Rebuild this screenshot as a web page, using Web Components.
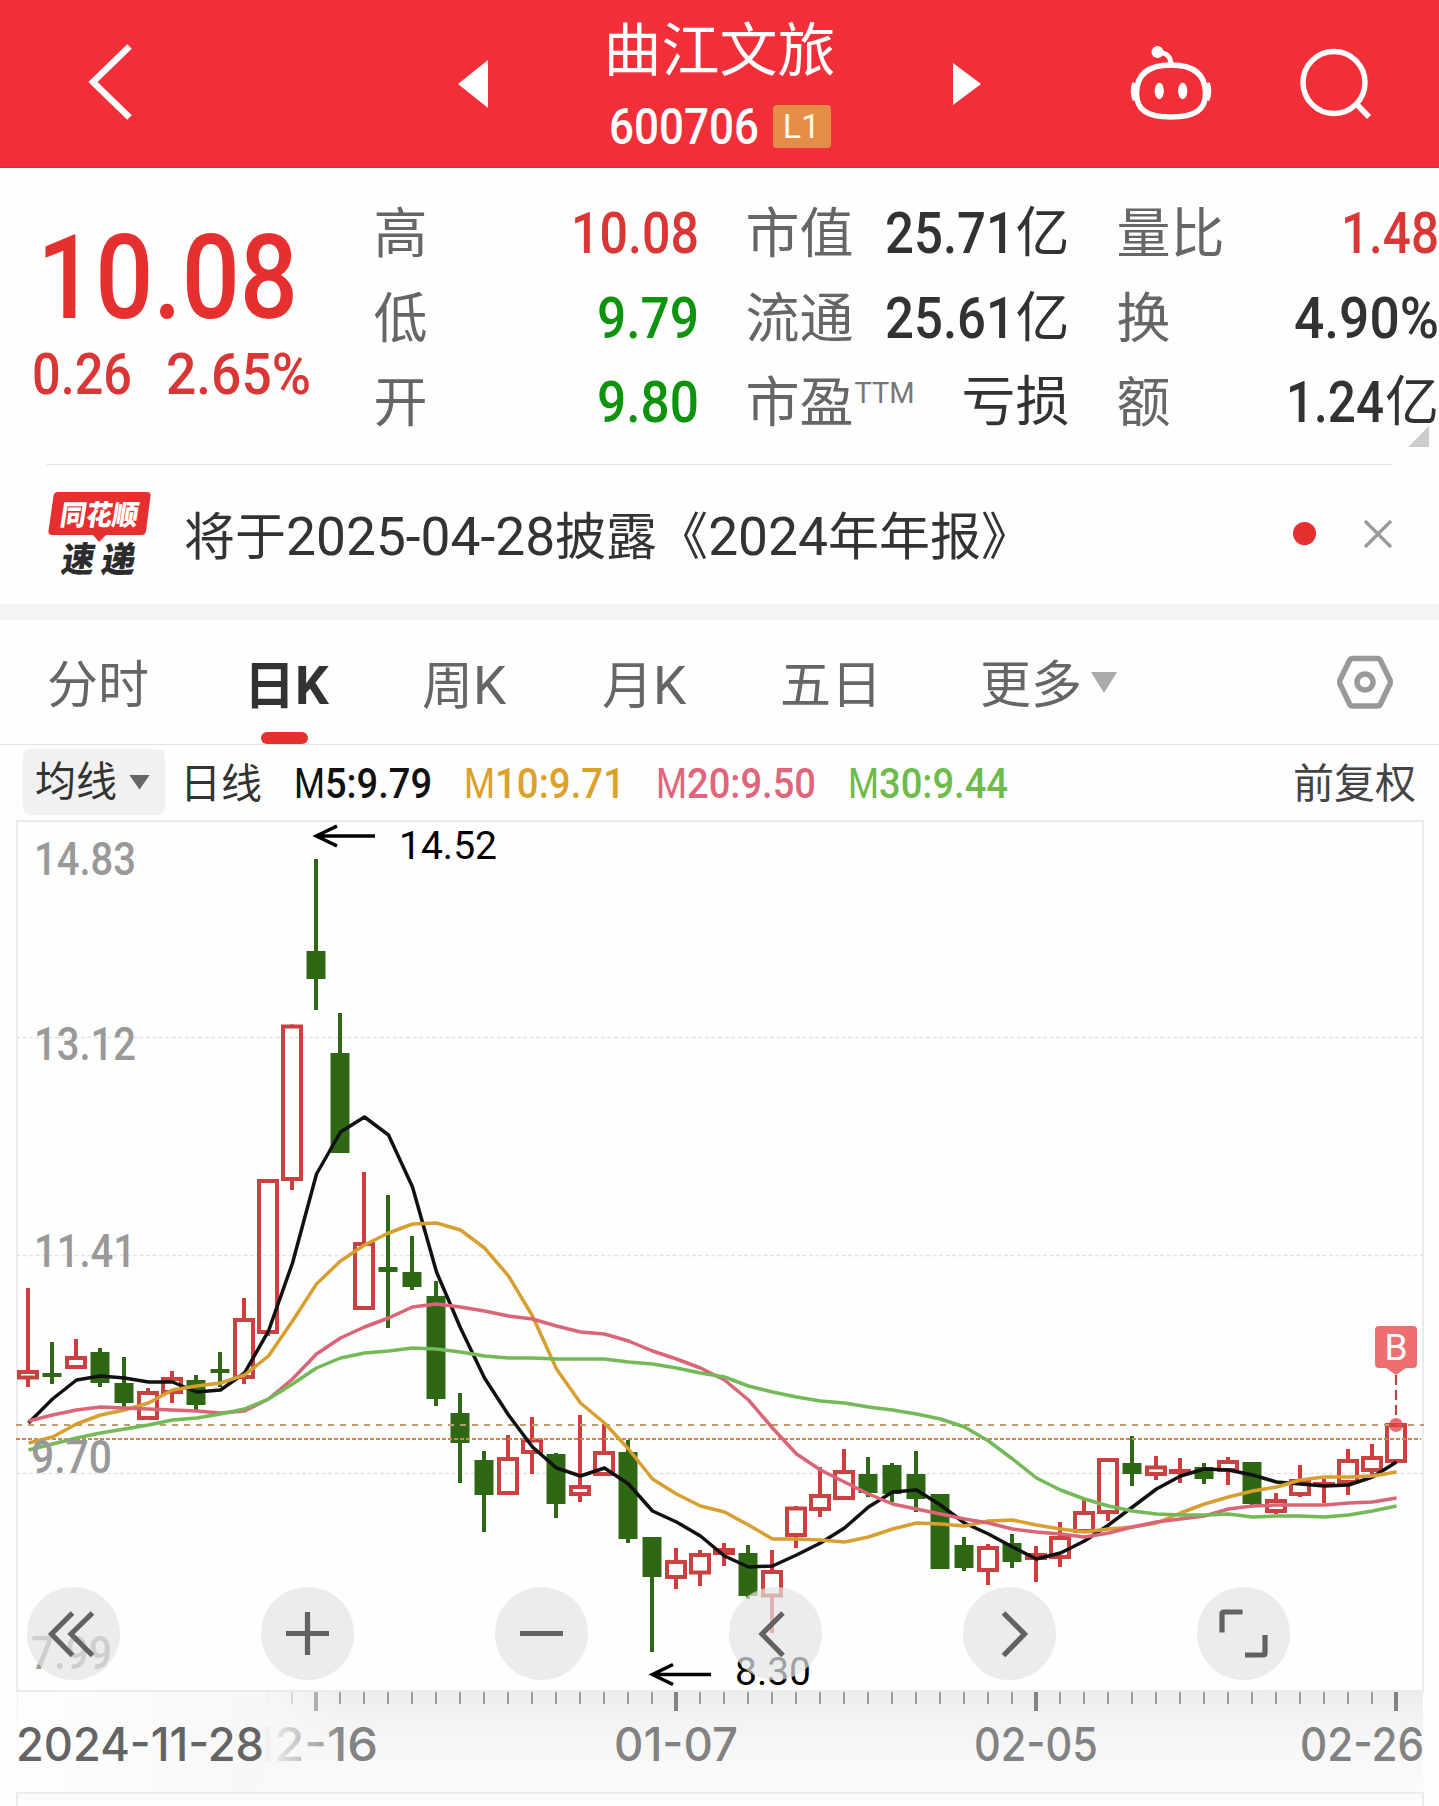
<!DOCTYPE html>
<html lang="zh-CN">
<head>
<meta charset="utf-8">
<title>曲江文旅 600706</title>
<style>
  body {
    margin: 0;
    width: 1439px;
    height: 1806px;
    overflow: hidden;
    background: #fefefe;
    color: #333;
    font-family: Roboto, "Noto Sans CJK SC", sans-serif;
  }
</style>
</head>
<body>
<stock-header code="600706" level="L1">曲江文旅</stock-header>

<quote-panel>
  <din-text slot="price" w="261" size="116" weight="500">10.08</din-text>
  <din-text slot="change" w="100" size="57.5" weight="500">0.26</din-text>
  <din-text slot="change" w="145" size="57.5" weight="500">2.65%</din-text>
  <stat-list>
    <stat-row label="高" tone="up"><din-text w="128" size="57.5" weight="500">10.08</din-text></stat-row>
    <stat-row label="低" tone="down"><din-text w="102" size="57.5" weight="500">9.79</din-text></stat-row>
    <stat-row label="开" tone="down"><din-text w="102" size="57.5" weight="500">9.80</din-text></stat-row>
  </stat-list>
  <stat-list>
    <stat-row label="市值"><din-text w="130" size="57.5" weight="500">25.71</din-text>亿</stat-row>
    <stat-row label="流通"><din-text w="130" size="57.5" weight="500">25.61</din-text>亿</stat-row>
    <stat-row label="市盈" sup="TTM">亏损</stat-row>
  </stat-list>
  <stat-list>
    <stat-row label="量比" tone="up"><din-text w="98" size="57.5" weight="500">1.48</din-text></stat-row>
    <stat-row label="换"><din-text w="145" size="57.5" weight="500">4.90%</din-text></stat-row>
    <stat-row label="额"><din-text w="98" size="57.5" weight="500">1.24</din-text>亿</stat-row>
  </stat-list>
</quote-panel>

<news-bar>将于<span>2025-04-28</span>披露《<span>2024</span>年年报》</news-bar>

<chart-tabs>
  <chart-tab w="197">分时</chart-tab>
  <chart-tab w="178" active>日<span>K</span></chart-tab>
  <chart-tab w="180">周<span>K</span></chart-tab>
  <chart-tab w="178">月<span>K</span></chart-tab>
  <chart-tab w="200">五日</chart-tab>
  <chart-tab more>更多</chart-tab>
</chart-tabs>

<ma-bar></ma-bar>
<kline-chart></kline-chart>

<script>
// Condensed figures: the slotted text is squeezed to exactly `w` pixels
class DinText extends HTMLElement {
  constructor() {
    super();
    this.attachShadow({ mode: 'open' });
    this.shadowRoot.innerHTML = `
      <style>
        :host { display: inline-block; white-space: nowrap; }
        span { display: inline-block; transform-origin: 0 50%; }
      </style>
      <span><slot></slot></span>
    `;
  }

  connectedCallback() {
    const w = Number(this.getAttribute('w'));
    const span = this.shadowRoot.querySelector('span');
    this.style.fontSize = this.getAttribute('size') + 'px';
    this.style.fontWeight = this.getAttribute('weight') || 400;
    span.style.transform = 'none';
    const natural = span.getBoundingClientRect().width;
    this.style.width = w + 'px';
    span.style.transform = `scaleX(${w / natural})`;
  }
}

class StockHeader extends HTMLElement {
  constructor() {
    super();
    this.attachShadow({ mode: 'open' });
    this.shadowRoot.innerHTML = `
      <style>
        :host {
          display: grid;
          grid-template-columns: 458px 30px 1fr 28px 458px;
          align-items: center;
          box-sizing: border-box;
          height: 168px;
          background: #f22f38;
          border-bottom: 1px solid #c9343b;
          color: #fff;
        }
        svg { display: block; fill: none; stroke: #fff; overflow: visible; }
        .solid { fill: #fff; stroke: none; }
        .title { display: flex; flex-direction: column; align-items: center; height: 168px; box-sizing: border-box; padding-top: 16px; }
        .name { font-size: 58px; line-height: 70px; height: 70px; margin-left: -2px; }
        .code { display: flex; align-items: center; gap: 14px; height: 82px; line-height: 84px; margin-left: -2px; }
        .level {
          width: 58px; height: 43px; line-height: 43px;
          margin-top: -2px;
          border-radius: 4px;
          background: #e38d49;
          color: #fffbe0;
          font-size: 34px;
          text-align: center;
        }
        .back { padding-left: 88px; margin-top: -5px; }
        .tools { display: flex; align-items: center; }
        .robot { margin-left: 147px; margin-top: -3px; }
        .search { margin-left: 89px; margin-top: -1px; }
      </style>
      <div class="back">
        <svg width="46" height="76" viewBox="88 43 46 76" stroke-width="6.500"><path d="M129.500 45.500 93 81l36.500 35.500"/></svg>
      </div>
      <svg class="solid" width="30" height="48" viewBox="458 60 30 48"><path d="M458 84l30-24v48z"/></svg>
      <div class="title">
        <div class="name"><slot></slot></div>
        <div class="code">
          <din-text w="150" size="49.5" weight="500">${this.getAttribute('code')}</din-text>
          <span class="level">${this.getAttribute('level')}</span>
        </div>
      </div>
      <svg class="solid" width="28" height="42" viewBox="953 63 28 42"><path d="M953 63v42l28-21z"/></svg>
      <div class="tools">
        <svg class="robot" width="84" height="76" viewBox="1128 44 84 76" stroke-width="5.500">
          <circle class="solid" cx="1157.500" cy="51" r="6"/>
          <path d="M1158 51.500c9 0 12.500 3.500 13 12" stroke-width="5"/>
          <path d="M1171 64c25 0 34.500 11 34.500 28.500 0 16-10 23.500-34.500 23.500s-34.500-7.500-34.500-23.500C1136.500 75 1146 64 1171 64z"/>
          <path d="M1134.600 82q-3 9 .5 17M1207.400 82q3 9-.5 17" stroke-width="5"/>
          <ellipse class="solid" cx="1159.300" cy="90" rx="4.600" ry="8.200"/>
          <ellipse class="solid" cx="1182.700" cy="90" rx="4.600" ry="8.200"/>
        </svg>
        <svg class="search" width="70" height="72" viewBox="1301 48 70 72" stroke-width="5.500">
          <circle cx="1334" cy="82.500" r="31"/>
          <path d="M1356.500 104l12.500 13"/>
        </svg>
      </div>
    `;
  }
}

class QuotePanel extends HTMLElement {
  constructor() {
    super();
    this.attachShadow({ mode: 'open' });
    this.shadowRoot.innerHTML = `
      <style>
        :host {
          display: grid;
          grid-template-columns: 326.500px 325px 324px 1fr;
          column-gap: 47px;
          box-sizing: border-box;
          height: 296px;
          padding-top: 22px;
          position: relative;
        }
        .price { color: #e62f2f; padding-left: 34px; }
        .now { height: 128px; line-height: 128px; padding-top: 24px; margin-left: 3px; }
        .change { display: flex; gap: 34px; height: 62px; line-height: 62px; margin-left: -2px; margin-top: 2px; color: #d93636; }
        .corner { position: absolute; right: 10px; bottom: 17px; width: 21px; height: 21px; background: #ccc; clip-path: polygon(100% 0, 100% 100%, 0 100%); }
      </style>
      <div class="price">
        <div class="now"><slot name="price"></slot></div>
        <div class="change"><slot name="change"></slot></div>
      </div>
      <slot></slot>
      <i class="corner"></i>
    `;
  }
}

class StatList extends HTMLElement {
  constructor() {
    super();
    this.attachShadow({ mode: 'open' });
    this.shadowRoot.innerHTML = `
      <style>
        :host { display: flex; flex-direction: column; padding-top: 2px; }
      </style>
      <slot></slot>
    `;
  }
}

class StatRow extends HTMLElement {
  constructor() {
    super();
    this.attachShadow({ mode: 'open' });
    this.shadowRoot.innerHTML = `
      <style>
        :host { display: flex; justify-content: space-between; height: 84.500px; line-height: 84.500px; font-size: 54px; color: #323232; white-space: nowrap; }
        :host([tone="up"]) .value { color: #d93636; }
        :host([tone="down"]) .value { color: #0f930f; }
        .label { color: #666; display: flex; padding-top: 1px; }
        .value { display: flex; gap: 1px; }
        sup { font-size: 29px; line-height: 62px; margin-left: 1px; color: #777; }
      </style>
      <div class="label"><span></span></div>
      <div class="value"><slot></slot></div>
    `;
    this.shadowRoot.querySelector('span').textContent = this.getAttribute('label');
    if (this.hasAttribute('sup')) {
      const sup = document.createElement('sup');
      sup.textContent = this.getAttribute('sup');
      this.shadowRoot.querySelector('.label').append(sup);
    }
  }
}

class NewsBar extends HTMLElement {
  constructor() {
    super();
    this.attachShadow({ mode: 'open' });
    this.shadowRoot.innerHTML = `
      <style>
        :host { display: block; height: 156px; }
        .row {
          display: flex;
          align-items: center;
          box-sizing: border-box;
          height: 140px;
          margin: 0 46px 0 46px;
          border-top: 1px solid #e6e6e6;
        }
        .band { height: 16px; background: #f4f4f4; }
        .logo { flex: none; margin: -2px 31px 0 1px; overflow: visible; }
        .text { flex: 1; font-size: 51px; line-height: 140px; margin-top: 5px; white-space: nowrap; color: #333; }
        ::slotted(span) { font-size: 53.300px; }
        .dot { width: 23px; height: 23px; border-radius: 50%; background: #e62f2f; margin-right: 47px; margin-top: -2px; }
        .close { fill: none; stroke: #999; stroke-width: 3.200; margin-top: -1px; }
      </style>
      <div class="row">
        <svg class="logo" width="106" height="88" viewBox="47 490 106 88">
          <path fill="#e62f2f" d="M58 492h89q4 0 3.500 4l-4.500 35q-.5 4-4.500 4H106l-7 7-6-7H52q-4 0-3.500-4l5-35q.5-4 4.500-4z"/>
          <g font-family="Noto Sans CJK SC, sans-serif" font-weight="900">
            <text transform="translate(59 524.500) skewX(-9)" font-size="28" textLength="78" lengthAdjust="spacingAndGlyphs" fill="#fff">同花顺</text>
            <text transform="translate(60 571.500) skewX(-9)" font-size="35" textLength="33" lengthAdjust="spacingAndGlyphs" fill="#2c2c2c">速</text>
            <text transform="translate(100 571.500) skewX(-9)" font-size="35" textLength="34" lengthAdjust="spacingAndGlyphs" fill="#2c2c2c">递</text>
          </g>
        </svg>
        <div class="text"><slot></slot></div>
        <i class="dot"></i>
        <svg class="close" width="30" height="30"><path d="M2 2l26 26M28 2L2 28"/></svg>
      </div>
      <div class="band"></div>
    `;
  }
}

class ChartTabs extends HTMLElement {
  constructor() {
    super();
    this.attachShadow({ mode: 'open' });
    this.shadowRoot.innerHTML = `
      <style>
        :host {
          display: flex;
          align-items: center;
          box-sizing: border-box;
          height: 125px;
          padding: 0 46px 0 47px;
          border-bottom: 1px solid #e3e3e3;
        }
        svg { margin-left: auto; fill: none; stroke: #999; }
      </style>
      <slot></slot>
      <svg width="56" height="54" viewBox="1337 655 56 54" stroke-width="5.500">
        <path stroke-linejoin="round" d="M1352.500 658.500h25q2 0 3 2l9.500 19.500q1 2 0 4l-9.500 20q-1 2-3 2h-25q-2 0-3-2l-9.500-20q-1-2 0-4l9.500-19.500q1-2 3-2z"/>
        <circle cx="1365" cy="682" r="8"/>
      </svg>
    `;
  }
}

class ChartTab extends HTMLElement {
  constructor() {
    super();
    this.attachShadow({ mode: 'open' });
    this.shadowRoot.innerHTML = `
      <style>
        :host { display: block; flex: none; position: relative; box-sizing: border-box; height: 124px; padding-top: 4px; font-size: 51px; line-height: 124px; color: #666; white-space: nowrap; }
        ::slotted(span) { font-size: 53px; }
        :host([active]) { color: #333; font-weight: 700; }
        :host([active])::after {
          content: "";
          position: absolute;
          left: 17px;
          bottom: 0;
          width: 47px;
          height: 12px;
          border-radius: 6px;
          background: #e62f2f;
        }
        .arrow { display: none; vertical-align: 10px; margin-left: 9px; width: 26px; height: 21px; background: #aaa; clip-path: polygon(0 0, 100% 0, 50% 100%); }
        :host([more]) .arrow { display: inline-block; }
      </style>
      <slot></slot><i class="arrow"></i>
    `;
    this.style.width = this.hasAttribute('w') ? this.getAttribute('w') + 'px' : 'auto';
  }
}

class MaBar extends HTMLElement {
  constructor() {
    super();
    this.attachShadow({ mode: 'open' });
    // text, width of the figures, cell width, colour
    const items = [
      ['5:9.79', 107, 170, '#111'],
      ['10:9.71', 130, 192, '#dba12a'],
      ['20:9.50', 129, 192, '#e0657a'],
      ['30:9.44', 129, 170, '#6dbb4c'],
    ];
    this.shadowRoot.innerHTML = `
      <style>
        :host { display: flex; align-items: center; box-sizing: border-box; height: 75px; padding: 0 23px 0 23px; font-size: 41px; line-height: 68px; color: #333; }
        .chip { display: flex; align-items: center; box-sizing: border-box; width: 142px; height: 66px; margin-top: -1px; padding-left: 12px; border-radius: 8px; background: #f1f1f1; }
        .chip i { width: 21px; height: 15px; margin-left: 12px; background: #666; clip-path: polygon(0 0, 100% 0, 50% 100%); }
        .kind { margin-left: 15px; width: 114px; }
        .kind, .item, .adjust { padding-top: 2px; }
        .item { display: flex; }
        .adjust { margin-left: auto; color: #444; }
      </style>
      <div class="chip">均线<i></i></div>
      <div class="kind">日线</div>
      ${items.map(([t, w, cell, c]) => `<div class="item" style="color:${c};width:${cell}px"><din-text w="31" size="42">M</din-text><din-text w="${w}" size="42" weight="500">${t}</din-text></div>`).join('')}
      <div class="adjust">前复权</div>
    `;
  }
}

// One entry per day: colour (r/g), high, body top, body bottom, low - in plot units
const CANDLES = [
  ['r', 1288, 1370, 1379.5, 1387], ['g', 1342, 1373, 1377, 1384], ['r', 1339, 1356, 1369, 1369],
  ['g', 1348, 1352, 1383, 1387], ['g', 1357, 1383, 1403, 1408], ['r', 1388, 1391, 1420, 1420],
  ['r', 1371, 1377, 1394, 1403], ['g', 1375, 1380, 1405, 1412], ['g', 1352, 1369, 1373, 1387],
  ['r', 1298, 1318, 1379, 1384], ['r', 1179, 1179, 1334, 1336], ['r', 1024.5, 1024.5, 1181, 1190],
  ['g', 859, 951, 979, 1010], ['g', 1013, 1053, 1153, 1153], ['r', 1172, 1242, 1310, 1310],
  ['g', 1195, 1267, 1272, 1328], ['g', 1236, 1272, 1287, 1290], ['g', 1281, 1296, 1399, 1406],
  ['g', 1393, 1413, 1443, 1483], ['g', 1451, 1460, 1495, 1532], ['r', 1435, 1457, 1495, 1495],
  ['r', 1417, 1438.5, 1454, 1474], ['g', 1453, 1454, 1504, 1518], ['r', 1415, 1485, 1496, 1502],
  ['r', 1424, 1451, 1476, 1476], ['g', 1440, 1452, 1539, 1543], ['g', 1537, 1537, 1577, 1652],
  ['r', 1548, 1560, 1579, 1589], ['r', 1550, 1553, 1574.5, 1586], ['r', 1543, 1548, 1555, 1566],
  ['g', 1545, 1553, 1596, 1599], ['r', 1550, 1570, 1597.5, 1633], ['r', 1506, 1506.5, 1537, 1548],
  ['r', 1467, 1494, 1511, 1517], ['r', 1449, 1470, 1500, 1500], ['g', 1457, 1474, 1493, 1497],
  ['g', 1463, 1465, 1494, 1502], ['g', 1451, 1474, 1499, 1512], ['g', 1494, 1494, 1569, 1569],
  ['g', 1537, 1545, 1568, 1571], ['r', 1544, 1546, 1572, 1585], ['g', 1534, 1543, 1562, 1568],
  ['r', 1546, 1553, 1560, 1582], ['r', 1522, 1536, 1559, 1567], ['r', 1500, 1511, 1533, 1533],
  ['r', 1458, 1458, 1514, 1521], ['g', 1436, 1463, 1474, 1486], ['r', 1456, 1465.5, 1476, 1480],
  ['r', 1458, 1469, 1474, 1483], ['g', 1463, 1467, 1479, 1484], ['r', 1457, 1460, 1472, 1485],
  ['g', 1462, 1462, 1504, 1507], ['r', 1493, 1499, 1513, 1514], ['r', 1465, 1479, 1496, 1497],
  ['r', 1479, 1482, 1485, 1503], ['r', 1449, 1459, 1484, 1495], ['r', 1444, 1456, 1472, 1475],
  ['r', 1423, 1423, 1463, 1463],
];

const AVERAGES = [
  ['#111', [1423, 1399, 1380, 1376, 1378, 1382, 1382, 1392, 1390, 1373, 1331, 1263, 1174, 1132, 1117, 1135, 1187, 1272, 1328, 1378, 1415, 1447, 1468, 1476, 1468, 1484, 1511, 1522, 1536, 1556, 1567, 1566, 1555, 1543, 1528, 1507, 1492, 1490, 1505, 1523, 1534, 1547, 1559, 1553, 1541, 1525, 1507, 1489, 1476, 1469, 1470, 1475, 1482, 1484, 1486, 1485, 1477, 1462]],
  ['#d79f2f', [1443, 1437, 1424, 1415, 1410, 1403, 1390, 1386, 1383, 1375, 1356, 1321, 1284, 1261, 1245, 1233, 1224, 1223, 1230, 1248, 1276, 1316, 1369, 1403, 1423, 1449, 1479, 1494, 1506, 1512, 1525, 1539, 1539, 1540, 1542, 1537, 1529, 1523, 1524, 1526, 1521, 1520, 1525, 1529, 1532, 1529, 1527, 1523, 1513, 1504, 1497, 1491, 1487, 1480, 1477, 1477, 1476, 1472]],
  ['#da6577', [1421, 1415, 1410, 1407, 1408, 1409, 1410, 1411, 1413, 1411, 1399, 1379, 1354, 1338, 1327, 1318, 1307, 1304, 1307, 1311, 1316, 1319, 1326, 1332, 1334, 1341, 1351, 1359, 1368, 1380, 1400, 1428, 1454, 1470, 1482, 1494, 1504, 1509, 1514, 1519, 1523, 1529, 1532, 1534, 1537, 1533, 1527, 1522, 1519, 1516, 1509, 1506, 1505, 1505, 1505, 1503, 1502, 1498]],
  ['#73b957', [1450, 1444, 1438, 1433, 1429, 1425, 1420, 1418, 1414, 1409, 1399, 1384, 1368, 1358, 1353, 1351, 1348, 1349, 1352, 1356, 1358, 1358, 1359, 1359, 1359, 1362, 1364, 1368, 1373, 1377, 1386, 1392, 1397, 1401, 1403, 1407, 1410, 1414, 1419, 1427, 1441, 1459, 1478, 1490, 1499, 1506, 1511, 1514, 1515, 1515, 1514, 1517, 1516, 1516, 1517, 1515, 1511, 1506]],
];

const STEP = 24;
const FIRST_X = 28;

class KlineChart extends HTMLElement {
  constructor() {
    super();
    this.attachShadow({ mode: 'open' });
    this.shadowRoot.innerHTML = `
      <style>
        :host { display: block; position: relative; height: 986px; }
        svg { display: block; }
        .num { font-weight: 500; font-size: 47px; fill: #999; }
        .date { fill: #828282; }
        .first { fill: #646464; }
        .mark { font-size: 38.500px; fill: #000; }
        chart-tools { position: absolute; left: 27px; top: 767px; }
      </style>
      <svg width="1439" height="986" viewBox="0 820 1439 986">
        <defs>
          <linearGradient id="shade" x1="0" y1="0" x2="0" y2="1">
            <stop offset="0" stop-color="#ededed"/><stop offset=".3" stop-color="#f4f4f4"/>
            <stop offset=".65" stop-color="#f9f9f9"/><stop offset="1" stop-color="#fbfbfb"/>
          </linearGradient>
          <linearGradient id="fade">
            <stop offset="0" stop-color="#fefefe"/><stop offset=".63" stop-color="#f8f8f8"/>
            <stop offset=".74" stop-color="#f8f8f8" stop-opacity=".92"/><stop offset=".96" stop-color="#f8f8f8" stop-opacity="0"/>
          </linearGradient>
        </defs>
        <rect x="17" y="1692" width="1406" height="109" fill="url(#shade)"/>
        ${this.grid()}
        ${this.ticks()}
        ${this.label(254, 1761, 124, '12-16', 'num date')}
        <rect x="18" y="1692" width="342" height="100" fill="url(#fade)"/>
        ${this.label(614, 1761, 124, '01-07', 'num date')}
        ${this.label(974, 1761, 124, '02-05', 'num date')}
        ${this.label(1300, 1761, 124, '02-26', 'num date')}
        ${this.label(16, 1761, 248, '2024-11-28', 'num first')}
        ${CANDLES.map((c, i) => this.candle(c, FIRST_X + i * STEP)).join('')}
        <path d="M16 1425H1424" stroke="#b89f72" stroke-width="1.900" stroke-dasharray="6 6"/>
        <path d="M16 1439H1421" stroke="#c98947" stroke-width="2.200" stroke-dasharray="4 2"/>
        ${[0, 1, 2, 3].map(k => this.average(AVERAGES[k])).join('')}
        ${this.label(34, 875, 102, '14.83', 'num')}
        ${this.label(34, 1060, 102, '13.12', 'num')}
        ${this.label(34, 1267, 102, '11.41', 'num')}
        ${this.label(31, 1473, 81, '9.70', 'num')}
        ${this.label(31, 1669, 81, '7.99', 'num')}
        <g fill="none" stroke="#000" stroke-width="3.600">
          <path d="M375 836H317M337 826l-20.500 10 20.500 10"/>
          <path d="M711 1674.500H653M673 1664.500l-20.500 10 20.500 10"/>
        </g>
        ${this.label(399, 859, 98, '14.52', 'mark')}
        ${this.label(735, 1685, 76, '8.30', 'mark')}
        <path d="M1396 1375v46" stroke="#b04a4a" stroke-width="2.200" stroke-dasharray="10 5"/>
        <circle cx="1396" cy="1425" r="7" fill="#e63c46" fill-opacity=".75"/>
        <path fill="#ee6f6f" d="M1379 1326h34q4 0 4 4v34q0 4-4 4h-7l-10 7-10-7h-7q-4 0-4-4v-34q0-4 4-4z"/>
        <text x="1396" y="1360" font-size="37" fill="#fff" text-anchor="middle">B</text>
      </svg>
      <chart-tools></chart-tools>
    `;
  }

  grid() {
    return `
      <g fill="none" stroke="#ebebeb" stroke-width="2">
        <path d="M17 821H1423V1691H17z"/>
        <path d="M17 1806V1793H1423V1806"/>
        <path d="M16 1037.500H1422M16 1255.500H1422M16 1473.500H1422" stroke="#e2e2e2" stroke-width="1.300" stroke-dasharray="4 2.500"/>
      </g>`;
  }

  ticks() {
    let out = '';
    for (let x = 268; x <= 1396; x += STEP) {
      const major = (x - 316) % 360 === 0;
      out += major
        ? `<rect x="${x - 2}" y="1692" width="4" height="19" fill="#828282"/>`
        : `<rect x="${x - 1}" y="1692" width="2" height="12" fill="#999"/>`;
    }
    return out;
  }

  candle([kind, high, top, bottom, low], x) {
    if (kind === 'g') {
      return `<g fill="#2f6814"><rect x="${x - 2}" y="${high}" width="4" height="${low - high}"/><rect x="${x - 9.5}" y="${top}" width="19" height="${bottom - top}"/></g>`;
    }
    const flat = bottom - top < 8;
    const body = flat
      ? `<rect x="${x - 11}" y="${top}" width="22" height="${bottom - top}" fill="#d03c3c"/>`
      : `<rect x="${x - 9}" y="${top + 2}" width="18" height="${bottom - top - 4}" fill="none" stroke="#c94141" stroke-width="4"/>`;
    return `<path d="M${x} ${high}V${top + 1}M${x} ${bottom - 1}V${low}" stroke="#d03c3c" stroke-width="4"/>${body}`;
  }

  average([color, ys]) {
    const points = ys.map((y, i) => `${FIRST_X + 0.5 + i * STEP},${y}`).join(' ');
    return `<polyline points="${points}" fill="none" stroke="${color}" stroke-width="3.500" stroke-linejoin="round"/>`;
  }

  label(x, y, w, text, cls) {
    // Inter has the longer hyphen of the two
    const font = text.includes('-') ? ' font-family="Inter" style="font-size:46px"' : '';
    return `<text class="${cls}" x="${x}" y="${y}" textLength="${w}" lengthAdjust="spacingAndGlyphs"${font}>${text}</text>`;
  }
}

class ChartTools extends HTMLElement {
  constructor() {
    super();
    this.attachShadow({ mode: 'open' });
    const icons = [
      'M-1-20.500L-22 .5-1 22M19-20.500L-2.500 .5 19 22',
      'M-21.500 0h43M0-21.500v43',
      'M-21.500 0h43',
      'M7.500-20.500L-13.500 .5 7.500 22',
      'M-6-20.500L15 .5-6 22',
      'M-1-21.500H-19.500q-2 0-2 2V-1M1.500 21.500H19.500q2 0 2-2V1.500',
    ];
    this.shadowRoot.innerHTML = `
      <style>
        :host { display: flex; gap: 141px; }
        .btn { width: 93px; height: 93px; border-radius: 50%; background: rgba(228, 228, 228, .7); }
        svg { display: block; fill: none; stroke: #626262; stroke-width: 5.200; }
      </style>
      ${icons.map(d => `<div class="btn"><svg width="93" height="93" viewBox="-46.500 -46.500 93 93"><path d="${d}"/></svg></div>`).join('')}
    `;
  }
}

customElements.define('din-text', DinText);
customElements.define('stock-header', StockHeader);
customElements.define('quote-panel', QuotePanel);
customElements.define('stat-list', StatList);
customElements.define('stat-row', StatRow);
customElements.define('news-bar', NewsBar);
customElements.define('chart-tabs', ChartTabs);
customElements.define('chart-tab', ChartTab);
customElements.define('ma-bar', MaBar);
customElements.define('kline-chart', KlineChart);
customElements.define('chart-tools', ChartTools);
</script>
</body>
</html>
